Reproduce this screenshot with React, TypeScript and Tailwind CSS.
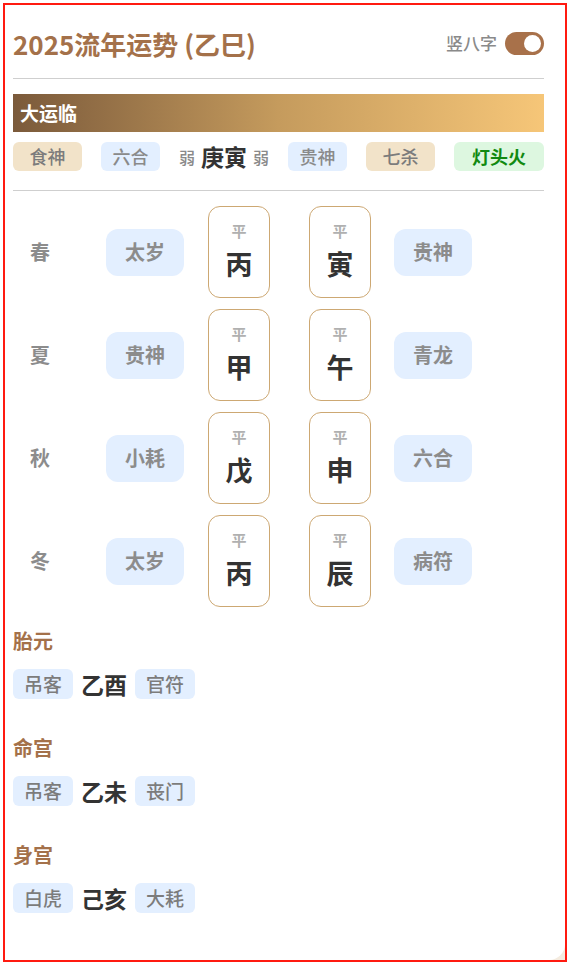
const FONT = { fontFamily: '"Noto Sans CJK SC", "Noto Sans", sans-serif' };

type Season = { name: string; left: string; stem: string; branch: string; right: string };

const seasons: Season[] = [
  { name: "春", left: "太岁", stem: "丙", branch: "寅", right: "贵神" },
  { name: "夏", left: "贵神", stem: "甲", branch: "午", right: "青龙" },
  { name: "秋", left: "小耗", stem: "戊", branch: "申", right: "六合" },
  { name: "冬", left: "太岁", stem: "丙", branch: "辰", right: "病符" },
];

const palaces = [
  { title: "胎元", left: "吊客", pillar: "乙酉", right: "官符" },
  { title: "命宫", left: "吊客", pillar: "乙未", right: "丧门" },
  { title: "身宫", left: "白虎", pillar: "己亥", right: "大耗" },
];

function PillarBox({ ch }: { ch: string }) {
  return (
    <div className="flex h-[92px] w-[62px] flex-col items-center rounded-xl border border-[#cda873] bg-white pt-[15px]">
      <span className="text-[15px] font-bold leading-[18px] text-[#b0b0b0]">平</span>
      <span className="mt-[8px] text-[27px] font-bold leading-[32px] text-[#333]">{ch}</span>
    </div>
  );
}

function GridTag({ text }: { text: string }) {
  return (
    <div className="flex h-[47px] w-[78px] items-center justify-center rounded-xl bg-[#e3efff] text-[20px] font-bold text-[#8c8c8c]">
      {text}
    </div>
  );
}

function SmallTag({ text }: { text: string }) {
  return (
    <div className="flex h-[30px] w-[60px] items-center justify-center rounded-md bg-[#e3efff] text-[19px] font-medium text-[#7c7c7c]">
      {text}
    </div>
  );
}

export default function App() {
  return (
    <div className="h-[963px] w-[570px] bg-white pl-[3px] pt-[3px]" style={FONT}>
      <div className="h-[959px] w-[564px] border-2 border-[#ff1a10] bg-[#f4ebdf]">
        <div className="h-full w-full rounded-br-2xl bg-white pl-[8px] pt-[16px]">
          <div className="w-[531px]">
            {/* header */}
            <div className="flex h-[44px] items-center justify-between">
              <h1 className="text-[26px] font-bold text-[#a4714a]">2025流年运势 (乙巳)</h1>
              <div className="flex items-center gap-[8px]">
                <span className="text-[17px] font-medium text-[#8a8a8a]">竖八字</span>
                <div className="flex h-[23px] w-[39px] items-center justify-end rounded-full bg-[#a8714a] pr-[3px]">
                  <div className="h-[17px] w-[17px] rounded-full bg-white" />
                </div>
              </div>
            </div>
            <div className="mt-[13px] h-px bg-[#cfcfcf]" />

            {/* 大运 */}
            <div className="mt-[15px] flex h-[38px] items-center bg-gradient-to-r from-[#7b5a3b] via-[#c59b5d] to-[#f6c678] pl-[7px]">
              <span className="text-[19px] font-bold text-white">大运临</span>
            </div>
            <div className="mt-[10px] flex h-[29px] items-center justify-between">
              <div className="flex h-full w-[69px] items-center justify-center rounded-md bg-[#f2e3c9] text-[18px] font-medium text-[#7c7c7c]">食神</div>
              <div className="flex h-full w-[59px] items-center justify-center rounded-md bg-[#e3efff] text-[18px] font-medium text-[#8a8a8a]">六合</div>
              <div className="flex items-center gap-[6px]">
                <span className="text-[16px] font-medium text-[#8a8a8a]">弱</span>
                <span className="text-[23px] font-bold text-[#333]">庚寅</span>
                <span className="text-[16px] font-medium text-[#8a8a8a]">弱</span>
              </div>
              <div className="flex h-full w-[59px] items-center justify-center rounded-md bg-[#e3efff] text-[18px] font-medium text-[#8a8a8a]">贵神</div>
              <div className="flex h-full w-[69px] items-center justify-center rounded-md bg-[#f2e3c9] text-[18px] font-medium text-[#7c7c7c]">七杀</div>
              <div className="flex h-full w-[90px] items-center justify-center rounded-md bg-[#ddf7e0] text-[18px] font-bold text-[#118a11]">灯头火</div>
            </div>
            <div className="mt-[19px] h-px bg-[#cfcfcf]" />

            {/* 四季 */}
            <div className="mt-[15px] flex flex-col gap-[11px]">
              {seasons.map((s) => (
                <div key={s.name} className="flex items-center">
                  <span className="ml-[17px] w-[20px] text-[20px] font-bold text-[#8c8c8c]">{s.name}</span>
                  <div className="ml-[56px]"><GridTag text={s.left} /></div>
                  <div className="ml-[24px]"><PillarBox ch={s.stem} /></div>
                  <div className="ml-[39px]"><PillarBox ch={s.branch} /></div>
                  <div className="ml-[23px]"><GridTag text={s.right} /></div>
                </div>
              ))}
            </div>

            {/* 胎元 命宫 身宫 */}
            <div className="mt-[20px] flex flex-col gap-[35px]">
              {palaces.map((p) => (
                <div key={p.title}>
                  <div className="h-[28px] text-[20px] font-bold leading-[28px] text-[#a4714a]">{p.title}</div>
                  <div className="mt-[14px] flex h-[30px] items-center gap-[8px]">
                    <SmallTag text={p.left} />
                    <span className="text-[23px] font-bold leading-[30px] text-[#333]">{p.pillar}</span>
                    <SmallTag text={p.right} />
                  </div>
                </div>
              ))}
            </div>
          </div>
        </div>
      </div>
    </div>
  );
}
